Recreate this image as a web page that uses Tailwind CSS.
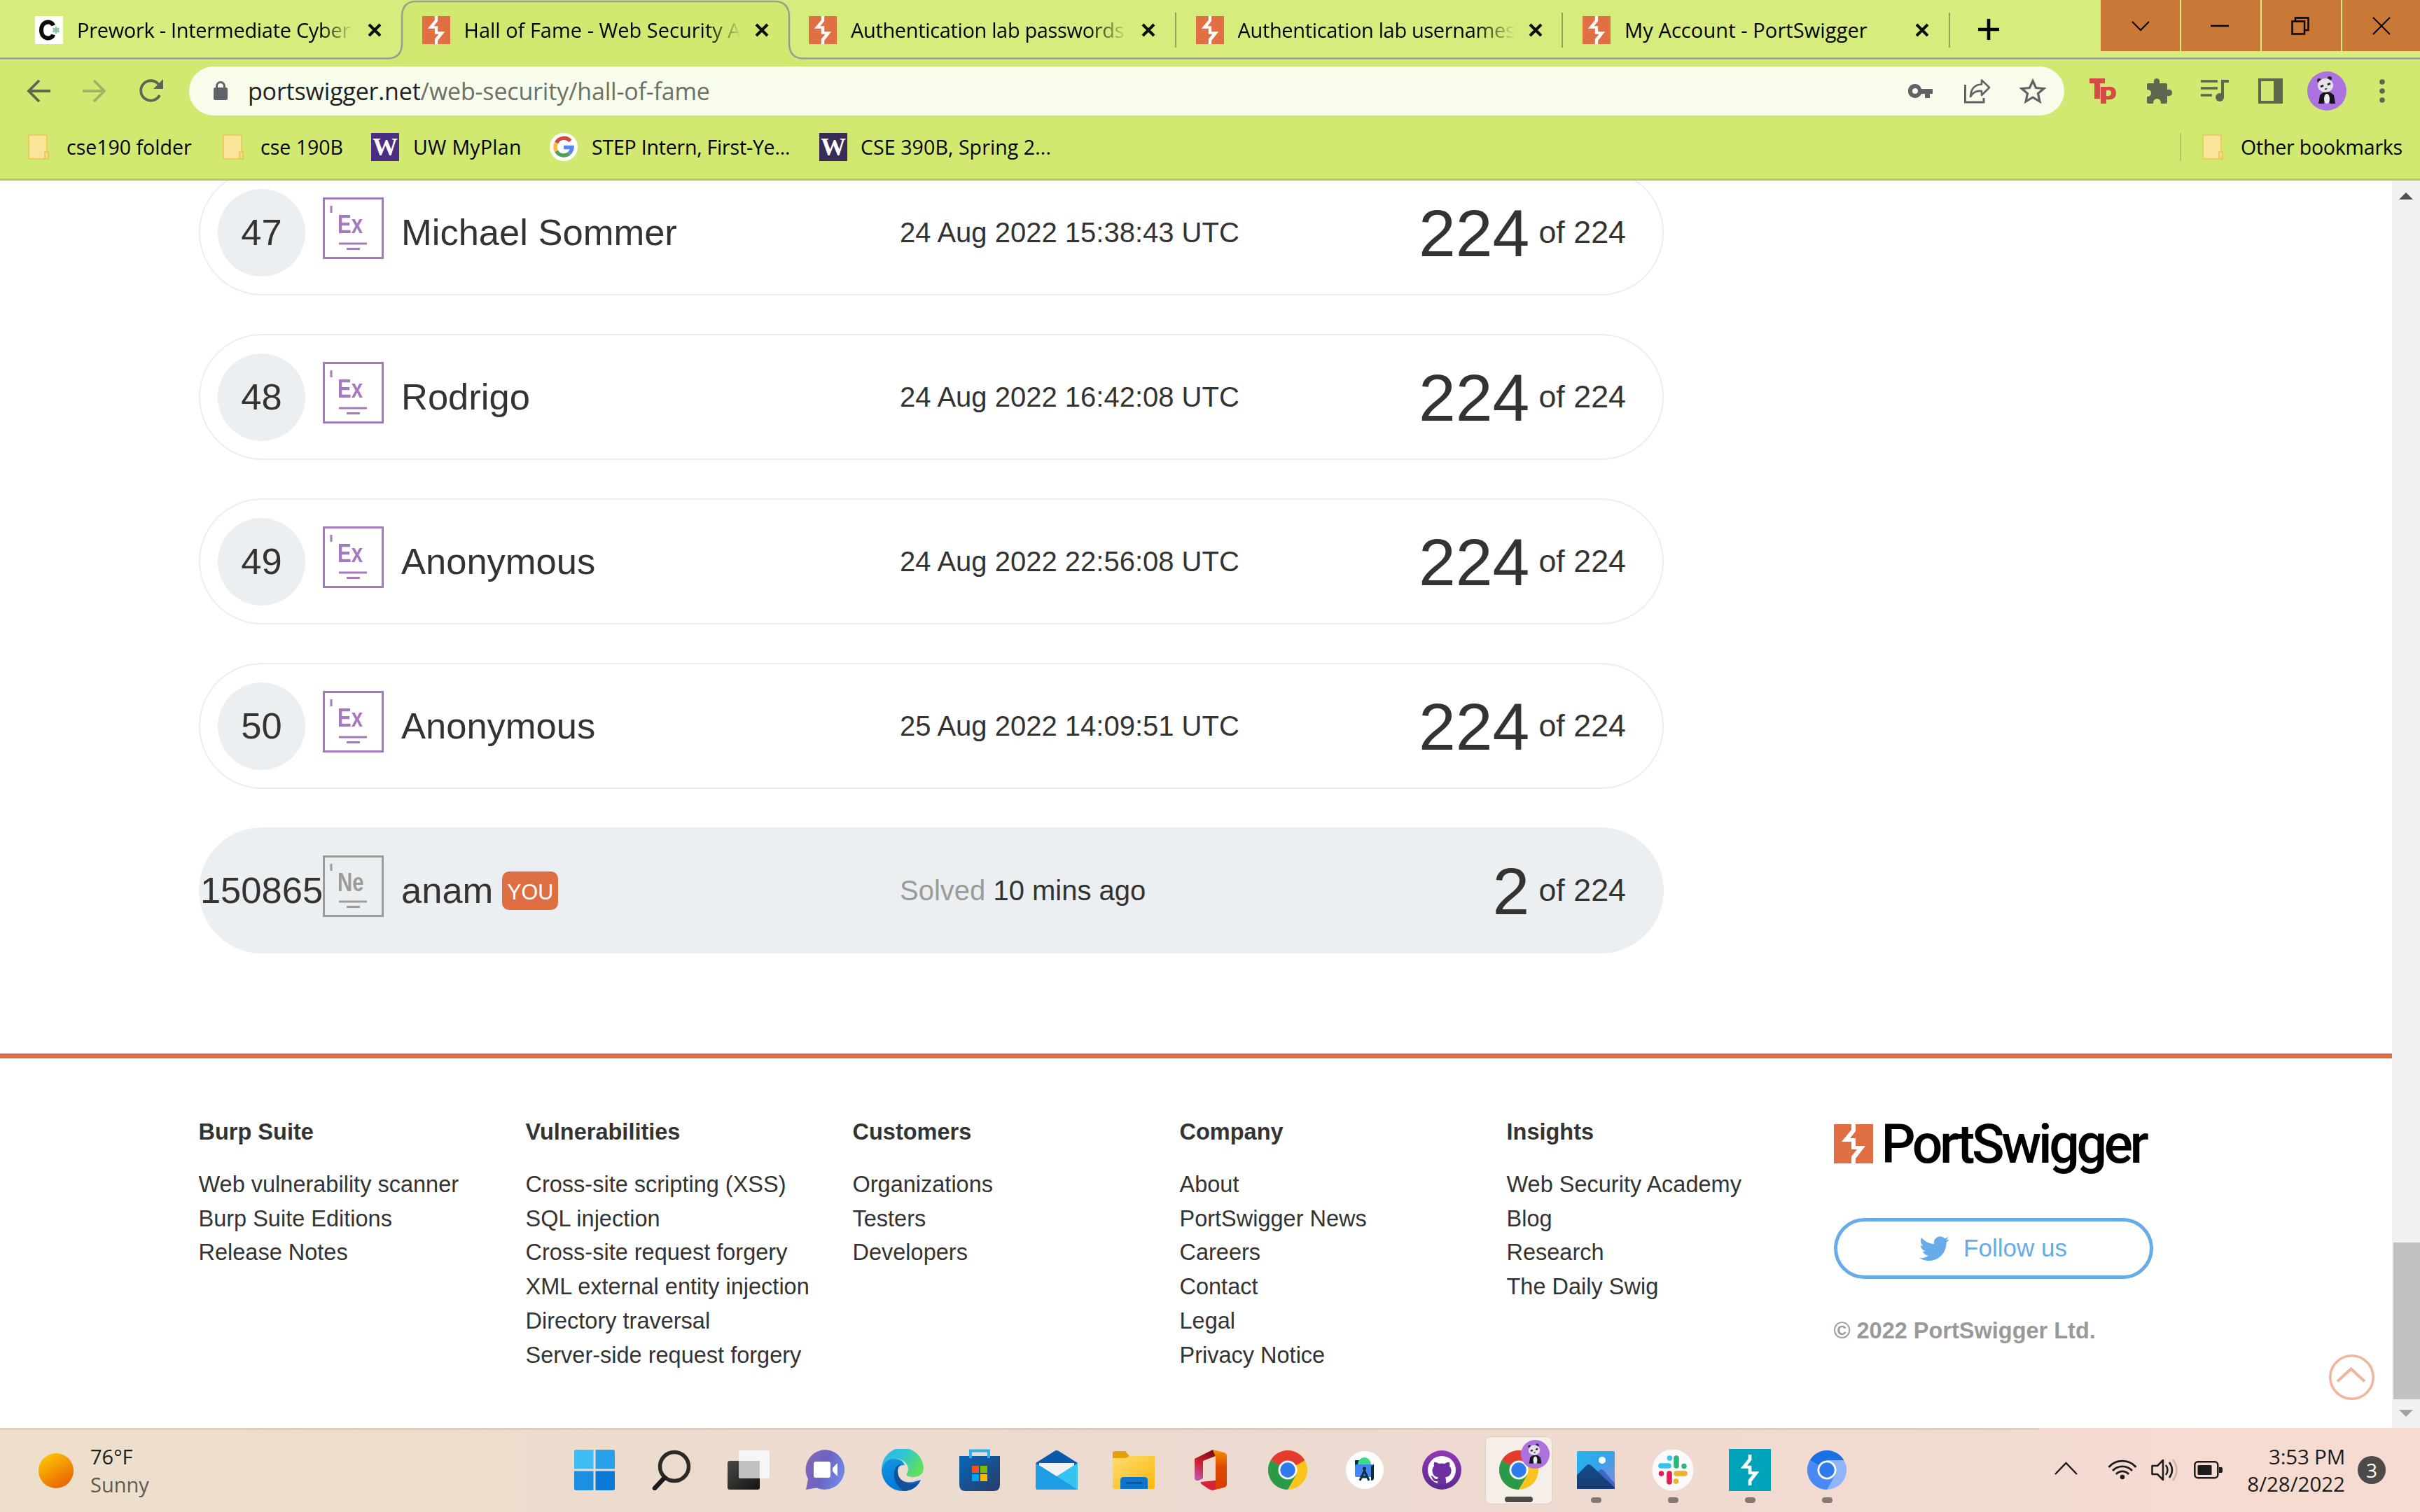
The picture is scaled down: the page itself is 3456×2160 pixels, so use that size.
<!DOCTYPE html>
<html lang="en">
<head>
<meta charset="utf-8">
<title>Hall of Fame - Web Security Academy</title>
<script src="https://cdn.jsdelivr.net/npm/@tailwindcss/browser@4"></script>
</head>
<body class="w-[3456px] h-[2160px] overflow-hidden bg-white text-[#333332] font-['Liberation_Sans',Arial,sans-serif]">

<!-- shared symbols -->
<svg class="absolute w-0 h-0" aria-hidden="true">
  <defs>
    <linearGradient id="gSun" x1="0.2" y1="0" x2="0.8" y2="1"><stop offset="0" stop-color="#fdc800"/><stop offset="1" stop-color="#e85d04"/></linearGradient>
    <linearGradient id="gChat" x1="0" y1="0.2" x2="1" y2="0.6"><stop offset="0" stop-color="#8466b4"/><stop offset="0.5" stop-color="#6c63c4"/><stop offset="1" stop-color="#6f8ae6"/></linearGradient>
    <linearGradient id="gEdgeA" x1="0" y1="0" x2="1" y2="0.5"><stop offset="0" stop-color="#2fb4f4"/><stop offset="0.5" stop-color="#2fc5d4"/><stop offset="1" stop-color="#5fe060"/></linearGradient>
    <linearGradient id="gEdgeB" x1="0" y1="0" x2="0.4" y2="1"><stop offset="0" stop-color="#1496e0"/><stop offset="1" stop-color="#0076d6"/></linearGradient>
    <linearGradient id="gStore" x1="0" y1="0" x2="1" y2="1"><stop offset="0" stop-color="#0667b8"/><stop offset="1" stop-color="#283c66"/></linearGradient>
    <linearGradient id="gFolder" x1="0" y1="0" x2="1" y2="1"><stop offset="0" stop-color="#ffdc72"/><stop offset="1" stop-color="#fbb808"/></linearGradient>
    <linearGradient id="gOffR" x1="0" y1="0" x2="0" y2="1"><stop offset="0" stop-color="#f59200"/><stop offset="0.4" stop-color="#e04a00"/><stop offset="1" stop-color="#d83b01"/></linearGradient>
    <linearGradient id="gOffL" x1="0.6" y1="0" x2="0.2" y2="1"><stop offset="0" stop-color="#8a0a10"/><stop offset="0.5" stop-color="#d02030"/><stop offset="1" stop-color="#b75fb0"/></linearGradient>
    <linearGradient id="gGit" x1="0" y1="0" x2="0" y2="1"><stop offset="0" stop-color="#9337b8"/><stop offset="1" stop-color="#5b2a90"/></linearGradient>
    <linearGradient id="gPhoto" x1="0" y1="0" x2="1" y2="1"><stop offset="0" stop-color="#28b4ee"/><stop offset="0.45" stop-color="#34a4ea"/><stop offset="1" stop-color="#8b84dc"/></linearGradient>
    <linearGradient id="gMtn" x1="0" y1="0" x2="0" y2="1"><stop offset="0" stop-color="#10508f"/><stop offset="1" stop-color="#1a3a72"/></linearGradient>
    <linearGradient id="gDark" x1="0" y1="0" x2="1" y2="1"><stop offset="0" stop-color="#484846"/><stop offset="1" stop-color="#141414"/></linearGradient>
  </defs>
  <symbol id="bolt" viewBox="0 0 56 56"><path d="M25 0H31V10L23 20H31V31H45L31 49V56H25V46L33 36H25V25H11L25 8Z"/></symbol>
  <symbol id="ps" viewBox="0 0 56 56"><rect width="56" height="56" fill="#e06f43"/><use href="#bolt" width="56" height="56" fill="#fff"/></symbol>
  <symbol id="x" viewBox="0 0 20 20"><path d="M2 2L18 18M18 2L2 18" stroke="#0b0b08" stroke-width="4" fill="none"/></symbol>
  <symbol id="folder" viewBox="0 0 30 36"><path d="M1 1H27V25H29V35H1Z" fill="#f8e59a" stroke="#edcb5c" stroke-width="2"/><path d="M24 34V25H29V35Z" fill="#f6dd84" stroke="#e9c458" stroke-width="1.5"/></symbol>
  <symbol id="panda" viewBox="0 0 56 56"><circle cx="28" cy="28" r="28" fill="#ac73e0"/><path d="M18 34Q28 24 38 34L40 46H32L31 38Q28 34 25 38L24 46H16Z" fill="#17141a"/><ellipse cx="28" cy="39" rx="4" ry="7" fill="#eeeaf2"/><circle cx="17" cy="13" r="3" fill="#2b2630"/><circle cx="32" cy="10" r="3" fill="#2b2630"/><ellipse cx="26" cy="20" rx="11" ry="10" fill="#e6e2ea"/><path d="M19 22L23 20M29 19L33 17" stroke="#222" stroke-width="3"/><path d="M25 25Q27 26 28 24" stroke="#222" stroke-width="1.500" fill="none"/></symbol>
  <symbol id="rank" viewBox="0 0 87 88"><rect x="1.5" y="1.5" width="84" height="85" fill="none" stroke="currentColor" stroke-width="3"/><path d="M12 12V22" stroke="currentColor" stroke-width="3"/><path d="M23 66H63" stroke="currentColor" stroke-width="3"/><path d="M34 73.5H53" stroke="currentColor" stroke-width="3"/></symbol>
  <symbol id="chrome" viewBox="0 0 56 56"><circle cx="28" cy="28" r="28" fill="#fcc31e"/><path d="M28 28L3.75 14A28 28 0 0 1 52.25 14Z" fill="#e33b2e"/><path d="M28 28L52.25 14H28Z" fill="#e33b2e"/><path d="M3.75 14A28 28 0 0 0 28 56L40 35L28 28Z" fill="#2a9a48"/><circle cx="28" cy="28" r="13.5" fill="#fff"/><circle cx="28" cy="28" r="10.7" fill="#2f7bee"/></symbol>
</svg>

<div class="flex flex-col h-[2160px]">

<!-- tab strip -->
<header class="font-['Open_Sans','Noto_Sans',sans-serif] text-black">
  <div class="relative flex items-start h-[85px] bg-[#d6ed7d] pl-[22px]">
    <svg class="absolute left-0 top-0" width="3456" height="85" viewBox="0 0 3456 85"><path d="M0 83.5H553Q574 83.5 574 62V24Q574 2 595 2H1106Q1127 2 1127 24V62Q1127 83.5 1148 83.5H3456V86H0Z" fill="#d1e970"/><path d="M0 83.5H553Q574 83.5 574 62V24Q574 2 595 2H1106Q1127 2 1127 24V62Q1127 83.5 1148 83.5H3456" fill="none" stroke="#9c9e96" stroke-width="2.6"/></svg>
    <div class="relative flex items-center h-[85px] w-[552.5px] pl-7">
      <svg width="40" height="40" viewBox="0 0 40 40"><rect width="40" height="40" fill="#fff"/><path d="M26 13.500C24 6 9 6 9 20S24 34 26 26.500" fill="none" stroke="#0b0b0b" stroke-width="6"/><path d="M30 15V25M25.500 17.500L34.500 22.500M34.500 17.500L25.500 22.500" stroke="#86c79c" stroke-width="2.600"/></svg>
      <span class="ml-[20px] w-[395px] whitespace-nowrap text-[29px] tracking-[-0.3px] [mask-image:linear-gradient(to_right,black_88%,transparent)]">Prework - Intermediate Cyber</span>
      <svg class="ml-[20px] mt-px" width="20" height="20"><use href="#x"/></svg>
    </div>
    <div class="relative flex items-center h-[85px] w-[552.5px] pl-7">
      <svg width="40" height="40"><use href="#ps"/></svg>
      <span class="ml-[20px] w-[395px] whitespace-nowrap text-[29px] [mask-image:linear-gradient(to_right,black_88%,transparent)]">Hall of Fame - Web Security A</span>
      <svg class="ml-[20px] mt-px" width="20" height="20"><use href="#x"/></svg>
    </div>
    <div class="relative flex items-center h-[85px] w-[552.5px] pl-7">
      <svg width="40" height="40"><use href="#ps"/></svg>
      <span class="ml-[20px] w-[395px] whitespace-nowrap text-[29px] tracking-[-0.35px] [mask-image:linear-gradient(to_right,black_86%,transparent)]">Authentication lab passwords</span>
      <svg class="ml-[20px] mt-px" width="20" height="20"><use href="#x"/></svg>
      <i class="ml-auto mr-0 w-[2px] h-[50px] bg-[#94a453]"></i>
    </div>
    <div class="relative flex items-center h-[85px] w-[552.5px] pl-7">
      <svg width="40" height="40"><use href="#ps"/></svg>
      <span class="ml-[20px] w-[395px] whitespace-nowrap text-[29px] tracking-[-0.35px] [mask-image:linear-gradient(to_right,black_86%,transparent)]">Authentication lab usernames</span>
      <svg class="ml-[20px] mt-px" width="20" height="20"><use href="#x"/></svg>
      <i class="ml-auto mr-0 w-[2px] h-[50px] bg-[#94a453]"></i>
    </div>
    <div class="relative flex items-center h-[85px] w-[552.5px] pl-7">
      <svg width="40" height="40"><use href="#ps"/></svg>
      <span class="ml-[20px] w-[395px] whitespace-nowrap text-[29px] tracking-[0.1px]">My Account - PortSwigger</span>
      <svg class="ml-[20px] mt-px" width="20" height="20"><use href="#x"/></svg>
      <i class="ml-auto mr-0 w-[2px] h-[50px] bg-[#94a453]"></i>
    </div>
    <svg class="relative ml-[40px] mt-[27px]" width="30" height="30"><path d="M15 0V30M0 15H30" stroke="#000" stroke-width="4.600"/></svg>
    <div class="relative ml-auto flex gap-[2px] h-[73px] text-black">
      <div class="w-[113px] grid place-items-center bg-[#c97838]"><svg width="26" height="16"><path d="M1 2L13 14L25 2" fill="none" stroke="#000" stroke-width="2"/></svg></div>
      <div class="w-[113px] grid place-items-center bg-[#c97838]"><svg class="mr-1" width="26" height="4"><path d="M0 2H26" stroke="#000" stroke-width="2.500"/></svg></div>
      <div class="w-[113px] grid place-items-center bg-[#c97838]"><svg class="mr-1" width="26" height="26"><path d="M1.500 6.500H19V24.500H1.500ZM6 6V1.500H24.500V19H19.500" fill="none" stroke="#000" stroke-width="2.400"/></svg></div>
      <div class="w-[111px] grid place-items-center bg-[#c97838]"><svg width="26" height="26"><path d="M1 1L25 25M25 1L1 25" stroke="#000" stroke-width="2"/></svg></div>
    </div>
  </div>

  <!-- toolbar -->
  <div class="flex items-center h-[90px] bg-[#d1e970] pl-[38px] text-[#5f6368]">
    <svg width="34" height="32" viewBox="0 0 34 32"><path d="M34 16H3M18 1L3 16L18 31" fill="none" stroke="#5f6650" stroke-width="3.800"/></svg>
    <svg class="ml-[46px]" width="34" height="32" viewBox="0 0 34 32"><path d="M0 16H31M16 1L31 16L16 31" fill="none" stroke="#a2b168" stroke-width="3.800"/></svg>
    <svg class="ml-[46px]" width="35" height="34" viewBox="0 0 35 34"><path d="M30 23A14.200 14.200 0 1 1 28 7L31 10" fill="none" stroke="#5f6650" stroke-width="3.800"/><path d="M35 0V14H21Z" fill="#5f6650"/></svg>
    <div class="ml-[37px] flex items-center w-[2678px] h-[70px] rounded-full bg-[#f8fcea] pl-[35px]">
      <svg width="20" height="28" viewBox="0 0 20 28"><rect y="9" width="20" height="18" rx="2.500" fill="#5f6368"/><path d="M4.500 10V7A5.500 5.500 0 0 1 15.500 7V10" fill="none" stroke="#5f6368" stroke-width="3"/></svg>
      <span class="ml-[29px] text-[34px] leading-none tracking-[-0.18px] text-[#1f2320]">portswigger.net<span class="text-[#6b7068]">/web-security/hall-of-fame</span></span>
      <svg class="ml-auto" width="36" height="20" viewBox="0 0 36 20"><path fill-rule="evenodd" d="M10 0A10 10 0 1 0 19 14H24V20H31V14H35V7H19A10 10 0 0 0 10 0ZM10 6A4 4 0 1 1 10 14A4 4 0 0 1 10 6Z" fill="#5f6368"/></svg>
      <svg class="ml-[44px]" width="38" height="36" viewBox="0 0 38 36"><path d="M1.500 9V34H28V28" fill="none" stroke="#5f6368" stroke-width="3"/><path d="M25 2.500L36 13L25 24V18Q14 17 9 26Q10 9 25 8.500Z" fill="none" stroke="#5f6368" stroke-width="2.600" stroke-linejoin="round"/></svg>
      <svg class="ml-[41px] mr-[26px]" width="38" height="36" viewBox="0 0 38 36"><path d="M19 3.500L23.500 13.500L35 14.500L26.500 21.500L29 33L19 27L9 33L11.500 21.500L3 14.500L14.500 13.500Z" fill="none" stroke="#5f6368" stroke-width="3.200"/></svg>
    </div>
    <svg class="ml-[36px]" width="38" height="36" viewBox="0 0 38 36"><path d="M0 0H22V7H15V29H7V7H0Z" fill="#d64a43"/><path fill-rule="evenodd" d="M16 12H24Q38 10 38 21T24 30V36H16ZM24 17V25Q31 26 31 21T24 17Z" fill="#d64a43"/></svg>
    <svg class="ml-[43px]" width="37" height="36" viewBox="0 0 37 36"><path d="M1 9Q1 7 3 7H11Q10 0 15 0T19 7H28Q30 7 30 9V16Q37 15 37 20.500T30 25V34Q30 36 28 36H21Q21 29 15.500 29T10 36H3Q1 36 1 34V26Q7 26 7 21T1 16Z" fill="#5f6650"/></svg>
    <svg class="ml-[41px]" width="40" height="32" viewBox="0 0 40 32"><path d="M0 2H24M0 12H24M0 22H16" stroke="#5f6650" stroke-width="3.600"/><path d="M31 26V2H40" fill="none" stroke="#5f6650" stroke-width="4"/><circle cx="27" cy="25" r="6" fill="#5f6650"/></svg>
    <svg class="ml-[42px]" width="35" height="36" viewBox="0 0 35 36"><path fill-rule="evenodd" d="M0 0H35V36H0ZM4 4V32H22V4Z" fill="#5f6650"/></svg>
    <svg class="ml-[35px]" width="56" height="56"><use href="#panda"/></svg>
    <svg class="ml-[47px]" width="8" height="34"><g fill="#5f6650"><circle cx="4" cy="4" r="3.800"/><circle cx="4" cy="17" r="3.800"/><circle cx="4" cy="30" r="3.800"/></g></svg>
  </div>

  <!-- bookmarks -->
  <div class="flex items-center h-[83px] bg-[#d1e970] border-b-[3px] border-[#b6c96a] pl-[40px] pb-[10px] text-[28.5px] leading-10 whitespace-nowrap">
    <svg width="30" height="36"><use href="#folder"/></svg>
    <span class="ml-[25px] w-[223px] -mt-px">cse190 folder</span>
    <svg width="30" height="36"><use href="#folder"/></svg>
    <span class="ml-[24px] w-[158px] -mt-px">cse 190B</span>
    <span class="w-10 h-10 grid place-items-center bg-[#4b2e83] text-white text-[36px] leading-none font-bold font-['Liberation_Serif',serif]">W</span>
    <span class="ml-[20px] w-[195px] -mt-px tracking-[0.3px]">UW MyPlan</span>
    <svg width="40" height="40" viewBox="0 0 40 40"><circle cx="20" cy="20" r="20" fill="#fff"/><g fill="none" stroke-width="5.500"><path d="M29.500 11.500A12 12 0 0 0 9.600 14" stroke="#cf4a3c"/><path d="M9.600 14A12 12 0 0 0 9.600 26" stroke="#f3be3a"/><path d="M9.600 26A12 12 0 0 0 28 29" stroke="#4fa358"/><path d="M28 29A12 12 0 0 0 32 20.500H20" stroke="#5a86ee"/></g></svg>
    <span class="ml-[20px] w-[325px] -mt-px tracking-[-0.2px]">STEP Intern, First-Ye...</span>
    <span class="w-10 h-10 grid place-items-center bg-[#392a56] text-white text-[36px] leading-none font-bold font-['Liberation_Serif',serif]">W</span>
    <span class="ml-[19px] -mt-px tracking-[0.1px]">CSE 390B, Spring 2...</span>
    <i class="ml-auto w-[2px] h-10 bg-[#b4c768]"></i>
    <svg class="ml-[30px]" width="30" height="36"><use href="#folder"/></svg>
    <span class="ml-[25px] w-[256px] -mt-px tracking-[-0.2px]">Other bookmarks</span>
  </div>
</header>

<!-- page -->
<div class="flex h-[1782px] overflow-hidden">
  <main class="relative w-[3416px] h-[1782px] overflow-hidden">
    <section class="-mt-4 ml-[284px] w-[2092px] flex flex-col gap-[55px] whitespace-nowrap">
      <div class="flex items-center h-[180px] rounded-full border-2 border-[#ebeff2] pl-[25px] pr-[52px]">
        <span class="w-[125px] h-[125px] rounded-full bg-[#ebeff2] grid place-items-center text-[52.5px]">47</span>
        <span class="relative ml-[25px] mb-3 w-[87px] h-[88px] text-[#a679bf]"><svg width="87" height="88"><use href="#rank"/></svg><b class="absolute left-[21px] top-[19px] text-[36px] leading-[40px] origin-left scale-x-[.82]">Ex</b></span>
        <span class="ml-[25px] w-[712px] text-[52.5px]">Michael Sommer</span>
        <span class="text-[40px]">24 Aug 2022 15:38:43 UTC</span>
        <span class="ml-auto pt-[2px] text-[95px] leading-none">224</span><span class="ml-[13px] text-[44.8px]">of 224</span>
      </div>
      <div class="flex items-center h-[180px] rounded-full border-2 border-[#ebeff2] pl-[25px] pr-[52px]">
        <span class="w-[125px] h-[125px] rounded-full bg-[#ebeff2] grid place-items-center text-[52.5px]">48</span>
        <span class="relative ml-[25px] mb-3 w-[87px] h-[88px] text-[#a679bf]"><svg width="87" height="88"><use href="#rank"/></svg><b class="absolute left-[21px] top-[19px] text-[36px] leading-[40px] origin-left scale-x-[.82]">Ex</b></span>
        <span class="ml-[25px] w-[712px] text-[52.5px]">Rodrigo</span>
        <span class="text-[40px]">24 Aug 2022 16:42:08 UTC</span>
        <span class="ml-auto pt-[2px] text-[95px] leading-none">224</span><span class="ml-[13px] text-[44.8px]">of 224</span>
      </div>
      <div class="flex items-center h-[180px] rounded-full border-2 border-[#ebeff2] pl-[25px] pr-[52px]">
        <span class="w-[125px] h-[125px] rounded-full bg-[#ebeff2] grid place-items-center text-[52.5px]">49</span>
        <span class="relative ml-[25px] mb-3 w-[87px] h-[88px] text-[#a679bf]"><svg width="87" height="88"><use href="#rank"/></svg><b class="absolute left-[21px] top-[19px] text-[36px] leading-[40px] origin-left scale-x-[.82]">Ex</b></span>
        <span class="ml-[25px] w-[712px] text-[52.5px]">Anonymous</span>
        <span class="text-[40px]">24 Aug 2022 22:56:08 UTC</span>
        <span class="ml-auto pt-[2px] text-[95px] leading-none">224</span><span class="ml-[13px] text-[44.8px]">of 224</span>
      </div>
      <div class="flex items-center h-[180px] rounded-full border-2 border-[#ebeff2] pl-[25px] pr-[52px]">
        <span class="w-[125px] h-[125px] rounded-full bg-[#ebeff2] grid place-items-center text-[52.5px]">50</span>
        <span class="relative ml-[25px] mb-3 w-[87px] h-[88px] text-[#a679bf]"><svg width="87" height="88"><use href="#rank"/></svg><b class="absolute left-[21px] top-[19px] text-[36px] leading-[40px] origin-left scale-x-[.82]">Ex</b></span>
        <span class="ml-[25px] w-[712px] text-[52.5px]">Anonymous</span>
        <span class="text-[40px]">25 Aug 2022 14:09:51 UTC</span>
        <span class="ml-auto pt-[2px] text-[95px] leading-none">224</span><span class="ml-[13px] text-[44.8px]">of 224</span>
      </div>
      <div class="flex items-center h-[180px] rounded-full border-2 border-[#ebeff2] bg-[#ebeff2] pl-[25px] pr-[52px]">
        <span class="w-[125px] h-[125px] flex items-center justify-center text-[52.5px]">150865</span>
        <span class="relative ml-[25px] mb-3 w-[87px] h-[88px] text-[#9b9b99]"><svg width="87" height="88"><use href="#rank"/></svg><b class="absolute left-[21px] top-[19px] text-[36px] leading-[40px] origin-left scale-x-[.82]">Ne</b></span>
        <span class="ml-[25px] w-[712px] flex items-center gap-[13px] text-[52.5px]">anam<span class="mt-px w-[80px] h-[55px] rounded-[10px] bg-[#de6f43] text-white text-[30.5px] leading-[58px] text-center">YOU</span></span>
        <span class="text-[40px]"><span class="text-[#9b9b99]">Solved</span> 10 mins ago</span>
        <span class="ml-auto pt-[2px] text-[95px] leading-none">2</span><span class="ml-[13px] text-[44.8px]">of 224</span>
      </div>
    </section>

    <footer class="mt-[143px] h-[528px] border-t-[7px] border-[#de6f43] pt-[81px] pl-[283.5px] flex text-[32.5px] leading-[48.75px] whitespace-nowrap">
      <div class="w-[467px]"><h4 class="font-bold mb-[26px]">Burp Suite</h4><ul><li>Web vulnerability scanner</li><li>Burp Suite Editions</li><li>Release Notes</li></ul></div>
      <div class="w-[467px]"><h4 class="font-bold mb-[26px]">Vulnerabilities</h4><ul><li>Cross-site scripting (XSS)</li><li>SQL injection</li><li>Cross-site request forgery</li><li>XML external entity injection</li><li>Directory traversal</li><li>Server-side request forgery</li></ul></div>
      <div class="w-[467px]"><h4 class="font-bold mb-[26px]">Customers</h4><ul><li>Organizations</li><li>Testers</li><li>Developers</li></ul></div>
      <div class="w-[467px]"><h4 class="font-bold mb-[26px]">Company</h4><ul><li>About</li><li>PortSwigger News</li><li>Careers</li><li>Contact</li><li>Legal</li><li>Privacy Notice</li></ul></div>
      <div class="w-[467px]"><h4 class="font-bold mb-[26px]">Insights</h4><ul><li>Web Security Academy</li><li>Blog</li><li>Research</li><li>The Daily Swig</li></ul></div>
      <div class="w-[456px] pt-[12px]">
        <div class="flex items-center h-[57px]">
          <svg width="56" height="56"><use href="#ps"/></svg>
          <span class="ml-[12px] pt-[3px] text-black font-medium text-[77px] leading-[57px] tracking-[-4.4px] font-[Roboto,sans-serif]">PortSwigger</span>
        </div>
        <div class="mt-[78px] h-[87px] rounded-full border-[5px] border-[#68abe9] flex items-center justify-center gap-[20px] text-[35px] text-[#68abe9]">
          <svg width="43" height="35" viewBox="0 2 24 19.700"><path fill="#68abe9" d="M23.950 4.570a10 10 0 0 1-2.820.770 4.960 4.960 0 0 0 2.160-2.720c-.950.550-2 .950-3.130 1.180a4.920 4.920 0 0 0-8.380 4.480C7.690 8.100 4.070 6.130 1.640 3.160a4.820 4.820 0 0 0-.670 2.480c0 1.710.870 3.210 2.190 4.100a4.900 4.900 0 0 1-2.230-.620v.060a4.920 4.920 0 0 0 3.950 4.830 5 5 0 0 1-2.210.080 4.940 4.940 0 0 0 4.600 3.420A9.870 9.870 0 0 1 0 19.540a14 14 0 0 0 7.550 2.210c9.050 0 14-7.500 14-13.980 0-.210 0-.420-.020-.630a9.940 9.940 0 0 0 2.420-2.570Z"/></svg>
          <span>Follow us</span>
        </div>
        <div class="mt-[50px] font-bold text-[#999]">© 2022 PortSwigger Ltd.</div>
      </div>
    </footer>
    <!-- back to top -->
    <svg class="absolute left-[3326px] top-[1677px]" width="65" height="65"><circle cx="32.500" cy="32.500" r="30.700" fill="none" stroke="#f1b59c" stroke-width="3.600"/><path d="M12 38.500L31.500 20.500L51 38.500" fill="none" stroke="#f1b59c" stroke-width="4.200"/></svg>
  </main>
  <!-- scrollbar -->
  <div class="w-10 bg-[#f1f1f1] flex flex-col items-center">
    <svg class="mt-[17px]" width="20" height="10"><path d="M10 0L20 10H0Z" fill="#505050"/></svg>
    <div class="mt-[1490px] ml-[2px] w-[38px] h-[224px] bg-[#c1c1c1]"></div>
    <svg class="mt-[15px]" width="20" height="10"><path d="M0 0H20L10 10Z" fill="#a3a3a3"/></svg>
  </div>
</div>

<!-- taskbar -->
<div class="relative flex h-[120px] bg-linear-to-r from-[#eedfcb] via-[#ecdad0] to-[#f7dbd0] text-[#1b1b1b] font-['Open_Sans','Noto_Sans',sans-serif]">
  <i class="absolute left-0 top-0 w-[2912px] h-[3px] bg-black/7"></i>
  <div class="w-[794px] flex items-center pl-[55px] pt-[2px] gap-[24px]">
    <svg width="50" height="50"><circle cx="25" cy="25" r="25" fill="url(#gSun)"/></svg>
    <div class="text-[29px] leading-10"><div>76°F</div><div class="text-[#5d5a55]">Sunny</div></div>
  </div>
  <div class="grid grid-cols-[repeat(17,110px)] place-items-center h-[120px]">
    <svg width="58" height="58" viewBox="0 0 58 58"><path d="M3 0H27.500V27.500H0V3Q0 0 3 0Z" fill="#3fbcf4"/><path d="M30.500 0H55Q58 0 58 3V27.500H30.500Z" fill="#28a0ea"/><path d="M0 30.500H27.500V58H3Q0 58 0 55Z" fill="#1c8fe0"/><path d="M30.500 30.500H58V55Q58 58 55 58H30.500Z" fill="#0b7ad6"/></svg>
    <svg width="56" height="58" viewBox="0 0 56 58"><circle cx="32" cy="24" r="20.500" fill="none" stroke="#2a2a28" stroke-width="5.500"/><path d="M18 40L4 55" stroke="#1b1b1b" stroke-width="6.500" stroke-linecap="round"/></svg>
    <svg width="60" height="56" viewBox="0 0 60 56"><rect y="15" width="46" height="41" rx="3" fill="url(#gDark)"/><rect x="16" width="44" height="40" rx="2.500" fill="#f6f6f6"/><path d="M16 15H46V40H18L16 38Z" fill="#c2c2c0"/></svg>
    <svg width="58" height="58" viewBox="0 0 58 58"><path d="M29 0A28.500 28.500 0 1 1 16 54.500L1 57L4 42A28.500 28.500 0 0 1 29 0Z" fill="url(#gChat)"/><rect x="12" y="17" width="24" height="23" rx="3" fill="#fff"/><path d="M39 26L46 19V38L39 31Z" fill="#fff"/></svg>
    <svg width="60" height="60" viewBox="0 0 60 60"><path d="M0 30A30 30 0 0 1 60 27C60 38 50 41 42 40Q34 39 36 35C42 26 34 14 20 14Q4 14 0 30Z" fill="url(#gEdgeA)"/><path d="M0 30Q4 14 18 14Q30 14 33 23Q23 22 23 32Q24 50 45 47Q53 45 56 44Q48 60 30 60A30 30 0 0 1 0 30Z" fill="url(#gEdgeB)"/><path d="M20 27Q12 44 31 60Q48 60 55.500 45Q50 50 41 49Q24 47 23 33Q22 25 28 22Q23 22 20 27Z" fill="#11509a"/></svg>
    <svg width="58" height="60" viewBox="0 0 58 60"><path d="M0 10H58V51Q58 60 49 60H9Q0 60 0 51Z" fill="url(#gStore)"/><path d="M16 13V2.500H42V13" fill="none" stroke="#28b2f2" stroke-width="4"/><path fill="#f25022" d="M18 24H28V34H18Z"/><path fill="#7fba00" d="M30 24H40V34H30Z"/><path fill="#00a4ef" d="M18 36H28V46H18Z"/><path fill="#ffb900" d="M30 36H40V46H30Z"/></svg>
    <svg width="60" height="56" viewBox="0 0 60 56"><path d="M0 18L27 1Q30-1 33 1L60 18V30H0Z" fill="#0a5aab"/><path d="M5 18H55V26L30 44L5 26Z" fill="#f3f3f3"/><path d="M60 18V56H0L30 37Z" fill="#35c3f2"/><path d="M0 18L60 56H3Q0 56 0 53Z" fill="#1e9de4"/></svg>
    <svg width="60" height="54" viewBox="0 0 60 54"><path d="M3 0H18L24 7H60V20H0V3Q0 0 3 0Z" fill="#e0a208"/><path d="M0 10H19L24 7H60V51Q60 54 57 54H3Q0 54 0 51Z" fill="url(#gFolder)"/><path d="M11 54V42Q11 37 16 37H45Q50 37 50 42V54Z" fill="#0f74cc"/><path d="M19 45.500H42" stroke="#0a4f94" stroke-width="2.400"/></svg>
    <svg width="46" height="58" viewBox="0 0 46 58"><path d="M26 0L0 13V40Q0 45 6 44L12 41V16L30 9Z" fill="url(#gOffL)"/><path d="M26 0L42 4Q46 5 46 9V49Q46 53 42 54L26 58V46L30 44V10Z" fill="url(#gOffR)"/><path d="M9 46L30 44V56L26 58Q23 58 20 56L11 50Q8 48 9 46Z" fill="#d5213c"/></svg>
    <svg width="56" height="56"><use href="#chrome"/></svg>
    <svg width="54" height="54" viewBox="0 0 54 54"><circle cx="27" cy="27" r="27" fill="#fff"/><rect x="13" y="13" width="10" height="14" fill="#073042"/><path d="M17 19A9.500 10 0 0 1 36 19Z" fill="#3ddc84"/><rect x="13" y="19" width="27" height="18" rx="2" fill="#4285f4"/><path d="M36 21Q40 21 40 17V39Q40 42 36 42Z" fill="#073042"/><path d="M27 27L20 42M26 27L33 42M21 37H32" stroke="#073042" stroke-width="3" fill="none"/><circle cx="26.500" cy="25" r="2.500" fill="#073042"/></svg>
    <svg width="56" height="56" viewBox="0 0 56 56"><circle cx="28" cy="28" r="28" fill="url(#gGit)"/><circle cx="28" cy="28" r="20" fill="#fff"/><path d="M17.500 16.500Q22 17 24 19Q28 18 32 19Q34 17 38.500 16.500Q40 20 39 22.500Q42 25.500 41.500 30Q41 37 33 38.500Q34 40 34 43V48H22V44Q16 45 14.500 40Q13.500 37 12 36.500Q15 35.500 17 39Q19 42 22 40.500Q22 39.500 23 38.500Q15 37 14.500 30Q14 25.500 17 22.500Q16 20 17.500 16.500Z" fill="#6f2fa3"/></svg>
    <div class="relative w-[96px] h-[97px] rounded-lg bg-[#f6eee9] border border-[#decfc5] grid place-items-center">
      <svg width="56" height="56"><use href="#chrome"/></svg>
      <svg class="absolute right-[3px] top-[4px]" width="41" height="41"><use href="#panda"/></svg>
      <i class="absolute bottom-[2px] w-10 h-2 rounded-full bg-[#4b4a47]"></i>
    </div>
    <div class="relative grid place-items-center h-[120px]"><svg width="54" height="54" viewBox="0 0 54 54"><rect width="54" height="54" rx="2" fill="url(#gPhoto)"/><circle cx="36" cy="13" r="5" fill="#fff"/><path d="M30 30Q35 22 40 30L54 46V54H40Z" fill="#3f67c8"/><path d="M0 34L13 21Q17 17 21 21L54 52V54H0Z" fill="url(#gMtn)"/></svg><i class="absolute bottom-[13px] w-[15px] h-2 rounded-full bg-[#857a73]"></i></div>
    <div class="relative grid place-items-center h-[120px]"><svg width="60" height="60" viewBox="0 0 60 60"><circle cx="30" cy="30" r="29.500" fill="#fafafa"/><g stroke-width="7.600" stroke-linecap="round"><path d="M13 24H24M25.500 13V13.100" stroke="#36c5f0"/><path d="M35 13V24M46 24.500V24.600" stroke="#2eb67d"/><path d="M47 35H35M34.500 46V46.100" stroke="#ecb22e"/><path d="M25 47V35M13.500 35V35.100" stroke="#e01e5a"/></g></svg><i class="absolute bottom-[13px] w-[15px] h-2 rounded-full bg-[#857a73]"></i></div>
    <div class="relative grid place-items-center h-[120px]"><svg width="60" height="60" viewBox="0 0 60 60"><rect width="60" height="60" fill="#00a3ba"/><use href="#bolt" x="8" y="8" width="44" height="44" fill="#fff"/></svg><i class="absolute bottom-[13px] w-[15px] h-2 rounded-full bg-[#857a73]"></i></div>
    <div class="relative grid place-items-center h-[120px]"><svg width="56" height="56" viewBox="0 0 56 56"><circle cx="28" cy="28" r="28" fill="#8fb5f8"/><path d="M28 28L3.750 14A28 28 0 0 1 52.250 14H28Z" fill="#1b70e4"/><path d="M3.750 14A28 28 0 0 0 28 56L40 35L28 28Z" fill="#4a8af4"/><circle cx="28" cy="28" r="13.500" fill="#fff"/><circle cx="28" cy="28" r="10.700" fill="#2f7bee"/></svg><i class="absolute bottom-[13px] w-[15px] h-2 rounded-full bg-[#857a73]"></i></div>
  </div>
  <div class="ml-auto flex items-center pr-[49px]">
    <svg class="-mt-1" width="33" height="20"><path d="M1 18L16.500 2L32 18" fill="none" stroke="#1b1b1b" stroke-width="2.500"/></svg>
    <svg class="ml-[43px] -mt-1" width="42" height="34" viewBox="0 0 42 34"><g fill="none" stroke="#1b1b1b" stroke-width="2.800"><path d="M1.500 15A26 26 0 0 1 40.500 15"/><path d="M7 20A19 19 0 0 1 35 20"/><path d="M12 25A12 12 0 0 1 30 25"/></g><circle cx="21" cy="29" r="3.200" fill="#1b1b1b"/></svg>
    <svg class="ml-[20px]" width="41" height="36" viewBox="0 0 41 36"><g fill="none" stroke="#1b1b1b" stroke-width="2.500" stroke-linejoin="round"><path d="M1.500 12H9L17 4V32L9 24H1.500Z"/><path d="M21 11Q26 18 21 25M26 7Q34 18 26 29"/><path d="M31 3Q42 18 31 33" stroke="#cbb5ab"/></g></svg>
    <svg class="ml-[20px]" width="41" height="26" viewBox="0 0 41 26"><rect x="1.300" y="1.300" width="33" height="23" rx="4.500" fill="none" stroke="#1b1b1b" stroke-width="2.500"/><rect x="5.500" y="6" width="20" height="14" rx="1.500" fill="#1b1b1b"/><path d="M36 9H39Q41 9 41 11V15Q41 17 39 17H36Z" fill="#1b1b1b"/></svg>
    <div class="ml-[35px] w-[140px] text-right text-[29.5px] leading-[39px] whitespace-nowrap"><div class="tracking-[-0.2px]">3:53 PM</div><div>8/28/2022</div></div>
    <span class="ml-[18px] w-10 h-10 rounded-full bg-[#4c4b47] text-white text-[28px] leading-10 text-center">3</span>
  </div>
</div>
</div>
</body>
</html>
